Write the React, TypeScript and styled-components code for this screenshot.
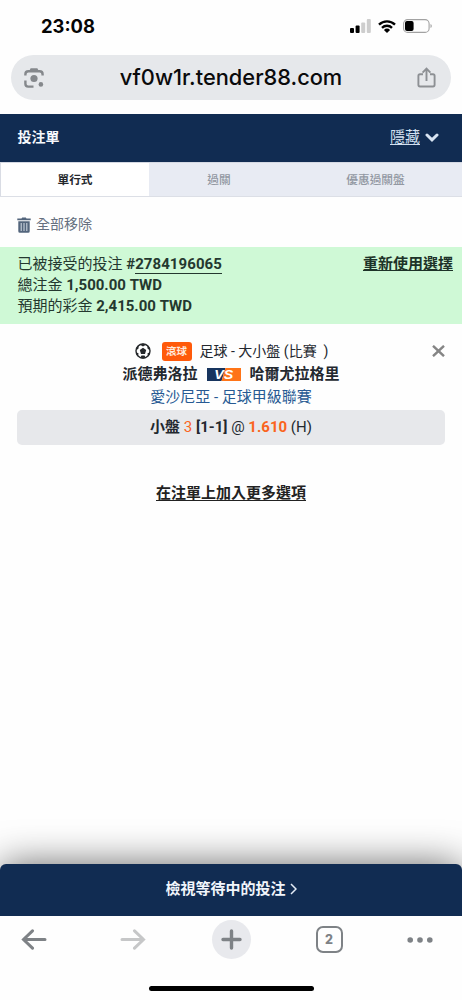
import React from 'react';
import styled, { createGlobalStyle } from 'styled-components';

const GlobalStyle = createGlobalStyle`
  * { box-sizing: border-box; }
  body { margin: 0; background: #fff; overflow: hidden; }
  button { border: 0; padding: 0; background: none; font: inherit; color: inherit; }
  svg { display: block; flex: none; }
`;

const Screen = styled.div`
  width: 462px;
  height: 1000px;
  display: flex;
  flex-direction: column;
  overflow: hidden;
  background: #fefefe;
  color: #23282f;
  font: 15px/21px Roboto, 'Noto Sans CJK TC', sans-serif;
`;

const StatusBar = styled.div`
  height: 55px;
  padding: 4px 30px 7px 41px;
  display: flex;
  align-items: center;
  justify-content: space-between;
`;

const Clock = styled.span`
  font: 700 18.4px/24px Inter, sans-serif;
  color: #050505;
`;

const StatusIcons = styled.div`
  display: flex;
  align-items: center;
  gap: 7px;
`;

const AddressBar = styled.div`
  height: 45px;
  margin: 0 11px 14px;
  padding: 0 15px 0 12px;
  display: flex;
  align-items: center;
  justify-content: space-between;
  border-radius: 23px;
  background: #e6e8eb;
`;

const Address = styled.span`
  padding-bottom: 2px;
  font: 500 21.8px/28px Inter, sans-serif;
  color: #0a0a0b;
`;

const SlipHeader = styled.header`
  height: 48px;
  padding: 0 23px 2px 17.5px;
  display: flex;
  align-items: center;
  justify-content: space-between;
  background: #112c52;
  color: #f5f8fc;
`;

const SlipTitle = styled.span`
  font-size: 14px;
  font-weight: 700;
`;

const HideButton = styled.button`
  display: flex;
  align-items: center;
  gap: 5px;
  color: #d3e0f0;
`;

const Underlined = styled.span`
  text-decoration: underline;
  text-decoration-thickness: 1px;
  text-underline-offset: 2px;
`;

const Tabs = styled.nav`
  height: 35px;
  display: grid;
  grid-template-columns: 149px 140px 173px;
  border-top: 1px solid #d5d9e3;
  border-bottom: 1px solid #dcdfe6;
  background: #e8ebf3;
`;

const Tab = styled.button<{ $active?: boolean }>`
  padding-top: 2px;
  font-size: 11.7px;
  font-weight: ${p => (p.$active ? 700 : 500)};
  color: ${p => (p.$active ? '#25282d' : '#9298a2')};
  background: ${p => (p.$active ? '#fff' : 'transparent')};
  border-left: ${p => (p.$active ? '1px solid #d9dce4' : '0')};
`;

const ClearRow = styled.div`
  height: 50px;
  padding: 5px 17px 0;
  display: flex;
  align-items: center;
  gap: 5px;
  font-size: 14px;
  color: #66707f;
`;

const Accepted = styled.section`
  height: 77px;
  padding: 7px 9px 7px 17.5px;
  display: flex;
  justify-content: space-between;
  background: #cff9d6;
  color: #24382f;
`;

const Strong = styled.b`
  font-weight: 700;
`;

const BetId = styled.b`
  font-weight: 700;
  letter-spacing: 0.08px;
  border-bottom: 1px solid #24382f;
`;

const Reuse = styled(Underlined)`
  font-weight: 700;
  text-underline-offset: 1px;
  color: #1d3328;
`;

const Selection = styled.section`
  height: 121px;
  padding: 15px 17px 0;
  display: grid;
  grid-template-columns: 20px 1fr 20px;
  grid-template-rows: 24px 23px 24px 35px;
  align-items: center;
`;

const Line = styled.div`
  grid-column: 2;
  display: flex;
  align-items: center;
  justify-content: center;
  white-space: pre;
`;

const MarketLine = styled(Line)`
  gap: 8px;
  padding-left: 1px;
`;

const BallSlot = styled.span`
  padding-right: 3px;
`;

const MarketName = styled.span`
  font-size: 14px;
`;

const TeamsLine = styled(Line)`
  gap: 9px;
  font-weight: 700;
`;

const LeagueLine = styled(Line)`
  padding-bottom: 2px;
  color: #275a93;
`;

const LiveTag = styled.span`
  width: 30px;
  height: 19px;
  border-radius: 3px;
  background: #ff5a0a;
  color: #ffe9dc;
  font-size: 10.5px;
  font-weight: 700;
  line-height: 20px;
  text-align: center;
`;

const CloseButton = styled.button`
  grid-column: 3;
  grid-row: 1;
  justify-self: end;
`;

const OddsBar = styled(Line)`
  grid-column: 1 / -1;
  height: 35px;
  border-radius: 5px;
  background: #e7e8eb;
`;

const Accent = styled.span<{ $bold?: boolean }>`
  color: #fa6420;
  font-weight: ${p => (p.$bold ? 700 : 400)};
`;

const AddMore = styled.div`
  flex: 1;
  padding-top: 38px;
  text-align: center;
  font-weight: 600;
  color: #222;
`;

const PendingButton = styled.button`
  height: 52px;
  flex: none;
  display: flex;
  align-items: center;
  justify-content: center;
  gap: 4px;
  padding-bottom: 2px;
  border-radius: 6px 6px 0 0;
  background: #112c52;
  box-shadow: 0 0 38px -1px rgba(0, 0, 0, 0.62);
  color: #f2f6fc;
  font-weight: 600;
`;

const BrowserBar = styled.footer`
  position: relative;
  height: 84px;
  flex: none;
  display: flex;
  flex-direction: column;
  align-items: center;
  justify-content: space-between;
  padding: 4px 0 9px;
  background: #fefefe;
`;

const BrowserActions = styled.div`
  width: 100%;
  height: 39px;
  display: grid;
  grid-template-columns: 68px 129px 68px 128px 54px;
  place-items: center;
`;

const NewTab = styled.span`
  width: 39px;
  height: 39px;
  display: grid;
  place-items: center;
  border-radius: 50%;
  background: #e8e9ed;
`;

const TabCount = styled.span`
  width: 27px;
  height: 27px;
  display: grid;
  place-items: center;
  border: 2.5px solid #7e8286;
  border-radius: 7px;
  color: #7e8286;
  font: 800 12.5px/18px Inter, sans-serif;
`;

const HomeIndicator = styled.div`
  width: 165px;
  height: 5px;
  border-radius: 3px;
  background: #000;
`;

const Signal = () => (
  <svg width="21" height="14" viewBox="0 0 21 14">
    <rect x="0" y="9" width="4" height="5" rx="1" fill="#000" />
    <rect x="5.6" y="6.5" width="4" height="7.5" rx="1" fill="#000" />
    <rect x="11.2" y="3.4" width="4" height="10.6" rx="1" fill="#cdcdcd" />
    <rect x="16.8" y="0" width="4" height="14" rx="1" fill="#cdcdcd" />
  </svg>
);

const Wifi = () => (
  <svg width="18" height="13" viewBox="0 0 18 13">
    <g fill="none" stroke="#000" strokeWidth="2.4">
      <path d="M1 4.6a11.5 11.5 0 0 1 16 0" />
      <path d="M4 7.8a7.2 7.2 0 0 1 10 0" />
    </g>
    <path d="M9 13 5.9 9.9a4.4 4.4 0 0 1 6.2 0Z" />
  </svg>
);

const Battery = () => (
  <svg width="29" height="14" viewBox="0 0 29 14">
    <rect x=".6" y=".6" width="25.5" height="12.8" rx="4" fill="none" stroke="#a2a2a2" strokeWidth="1.1" />
    <rect x="2" y="2" width="8.6" height="10" rx="2" />
    <path d="M27.5 5v4q1.3-.6 1.3-2t-1.3-2Z" fill="#a2a2a2" />
  </svg>
);

const Lens = () => (
  <svg width="22" height="22" viewBox="0 0 22 22" fill="none" stroke="#85888c" strokeWidth="2.4">
    <path d="M2.4 8.6V7.3Q2.4 4.3 5.4 4.3h11.2q3 0 3 3v1.3M2.4 13.5v3.3q0 2.8 2.8 2.8h5.3" />
    <path d="M6 4.6 7.6 1.3h6.8L16 4.6Z" fill="#85888c" stroke="none" />
    <circle cx="11" cy="11.5" r="3.6" fill="#85888c" stroke="none" />
    <circle cx="17.9" cy="17.4" r="2.3" fill="#85888c" stroke="none" />
  </svg>
);

const Share = () => (
  <svg width="19" height="21" viewBox="0 0 19 21" fill="none" stroke="#8d9094" strokeWidth="1.9">
    <path d="M6 7.2H3q-1.6 0-1.6 1.6v9q0 1.7 1.6 1.7h13q1.6 0 1.6-1.7v-9q0-1.6-1.6-1.6h-3M9.5 14V2M5.6 5.6l3.9-4 3.9 4" />
  </svg>
);

const Trash = () => (
  <svg width="14" height="16" viewBox="0 0 14 16">
    <path d="M.3 1.5h4.2L5.2.4h3.6l.7 1.1h4.2v1.8H.3ZM1.3 4.3h11.4v10q0 1.5-1.5 1.5H2.8q-1.5 0-1.5-1.5Z" fill="#53657c" />
    <path d="M4.2 6v8M7 6v8M9.8 6v8" stroke="#cbd3dd" strokeWidth="1.1" />
  </svg>
);

const Ball = () => (
  <svg width="16" height="16" viewBox="0 0 16 16">
    <circle cx="8" cy="8" r="7" fill="#fff" stroke="#25282b" strokeWidth="1.4" />
    <path d="m8 4.8 3.2 2.3-1.2 3.8H6L4.8 7.1ZM4.6 1.4 8 3.4l3.4-2L8 .4ZM.8 7.8l2.7-2.2.3-3.6-2.2 2.5ZM15.2 7.8l-2.7-2.2-.3-3.6 2.2 2.5ZM3 13.4l.5-3.2-2.6-.9.6 2.6ZM13 13.4l-.5-3.2 2.6-.9-.6 2.6ZM5.1 15l1.4-2.5h3L10.9 15 8 15.8Z" fill="#25282b" />
  </svg>
);

const Versus = () => (
  <svg width="34" height="13" viewBox="0 0 34 13">
    <path d="M0 0h18.5l-4 13H0Z" fill="#17345e" />
    <path d="M18.5 0H34v13H14.5Z" fill="#ff7417" />
    <text x="7.2" y="11.3" fontFamily="Liberation Sans, sans-serif" fontSize="13" fontWeight="700" fontStyle="italic" fill="#fff" textLength="19" lengthAdjust="spacingAndGlyphs">VS</text>
  </svg>
);

export default function App() {
  return (
    <Screen>
      <GlobalStyle />
      <StatusBar>
        <Clock>23:08</Clock>
        <StatusIcons><Signal /><Wifi /><Battery /></StatusIcons>
      </StatusBar>
      <AddressBar>
        <Lens />
        <Address>vf0w1r.tender88.com</Address>
        <Share />
      </AddressBar>

      <SlipHeader>
        <SlipTitle>投注單</SlipTitle>
        <HideButton>
          <Underlined>隱藏</Underlined>
          <svg width="14" height="9" viewBox="0 0 14 9" fill="none" stroke="#d8e4f2" strokeWidth="3" strokeLinecap="round">
            <path d="M2 2l5 4.8L12 2" />
          </svg>
        </HideButton>
      </SlipHeader>
      <Tabs>
        <Tab $active>單行式</Tab>
        <Tab>過關</Tab>
        <Tab>優惠過關盤</Tab>
      </Tabs>
      <ClearRow><Trash />全部移除</ClearRow>

      <Accepted>
        <div>
          <div>已被接受的投注 <Strong>#</Strong><BetId>2784196065</BetId></div>
          <div>總注金 <Strong>1,500.00 TWD</Strong></div>
          <div>預期的彩金 <Strong>2,415.00 TWD</Strong></div>
        </div>
        <Reuse>重新使用選擇</Reuse>
      </Accepted>

      <Selection>
        <MarketLine>
          <BallSlot><Ball /></BallSlot>
          <LiveTag>滾球</LiveTag>
          <MarketName>{'足球 - 大小盤 (比賽  )'}</MarketName>
        </MarketLine>
        <CloseButton aria-label="移除">
          <svg width="13" height="12" viewBox="0 0 13 12" stroke="#858585" strokeWidth="2.4">
            <path d="m1 .8 11 10.4M12 .8 1 11.2" />
          </svg>
        </CloseButton>
        <TeamsLine>派德弗洛拉<Versus />哈爾尤拉格里</TeamsLine>
        <LeagueLine>愛沙尼亞 - 足球甲級聯賽</LeagueLine>
        <OddsBar>
          <Strong>小盤 </Strong><Accent>3</Accent><Strong> [1-1]</Strong>{' @ '}<Accent $bold>1.610</Accent>{' (H)'}
        </OddsBar>
      </Selection>
      <AddMore><Underlined>在注單上加入更多選項</Underlined></AddMore>

      <PendingButton>
        檢視等待中的投注
        <svg width="7" height="12" viewBox="0 0 7 12" fill="none" stroke="#e4ecf7" strokeWidth="1.5">
          <path d="m1 1 5 5-5 5" />
        </svg>
      </PendingButton>
      <BrowserBar>
        <BrowserActions>
          <svg width="26" height="21" viewBox="0 0 26 21" fill="none" stroke="#7e8286" strokeWidth="3" strokeLinecap="round">
            <path d="M24 10.5H2.5M11.5 1.8l-9 8.7 9 8.7" />
          </svg>
          <svg width="26" height="21" viewBox="0 0 26 21" fill="none" stroke="#c6c7c8" strokeWidth="3" strokeLinecap="round">
            <path d="M2 10.5h21.5M14.5 1.8l9 8.7-9 8.7" />
          </svg>
          <NewTab>
            <svg width="21" height="21" viewBox="0 0 21 21" stroke="#7e8286" strokeWidth="3.4" strokeLinecap="round">
              <path d="M10.5 2v17M2 10.5h17" />
            </svg>
          </NewTab>
          <TabCount>2</TabCount>
          <svg width="26" height="6" viewBox="0 0 26 6" fill="#7e8286">
            <circle cx="3.2" cy="3" r="2.8" /><circle cx="13" cy="3" r="2.8" /><circle cx="22.8" cy="3" r="2.8" />
          </svg>
        </BrowserActions>
        <HomeIndicator />
      </BrowserBar>
    </Screen>
  );
}
